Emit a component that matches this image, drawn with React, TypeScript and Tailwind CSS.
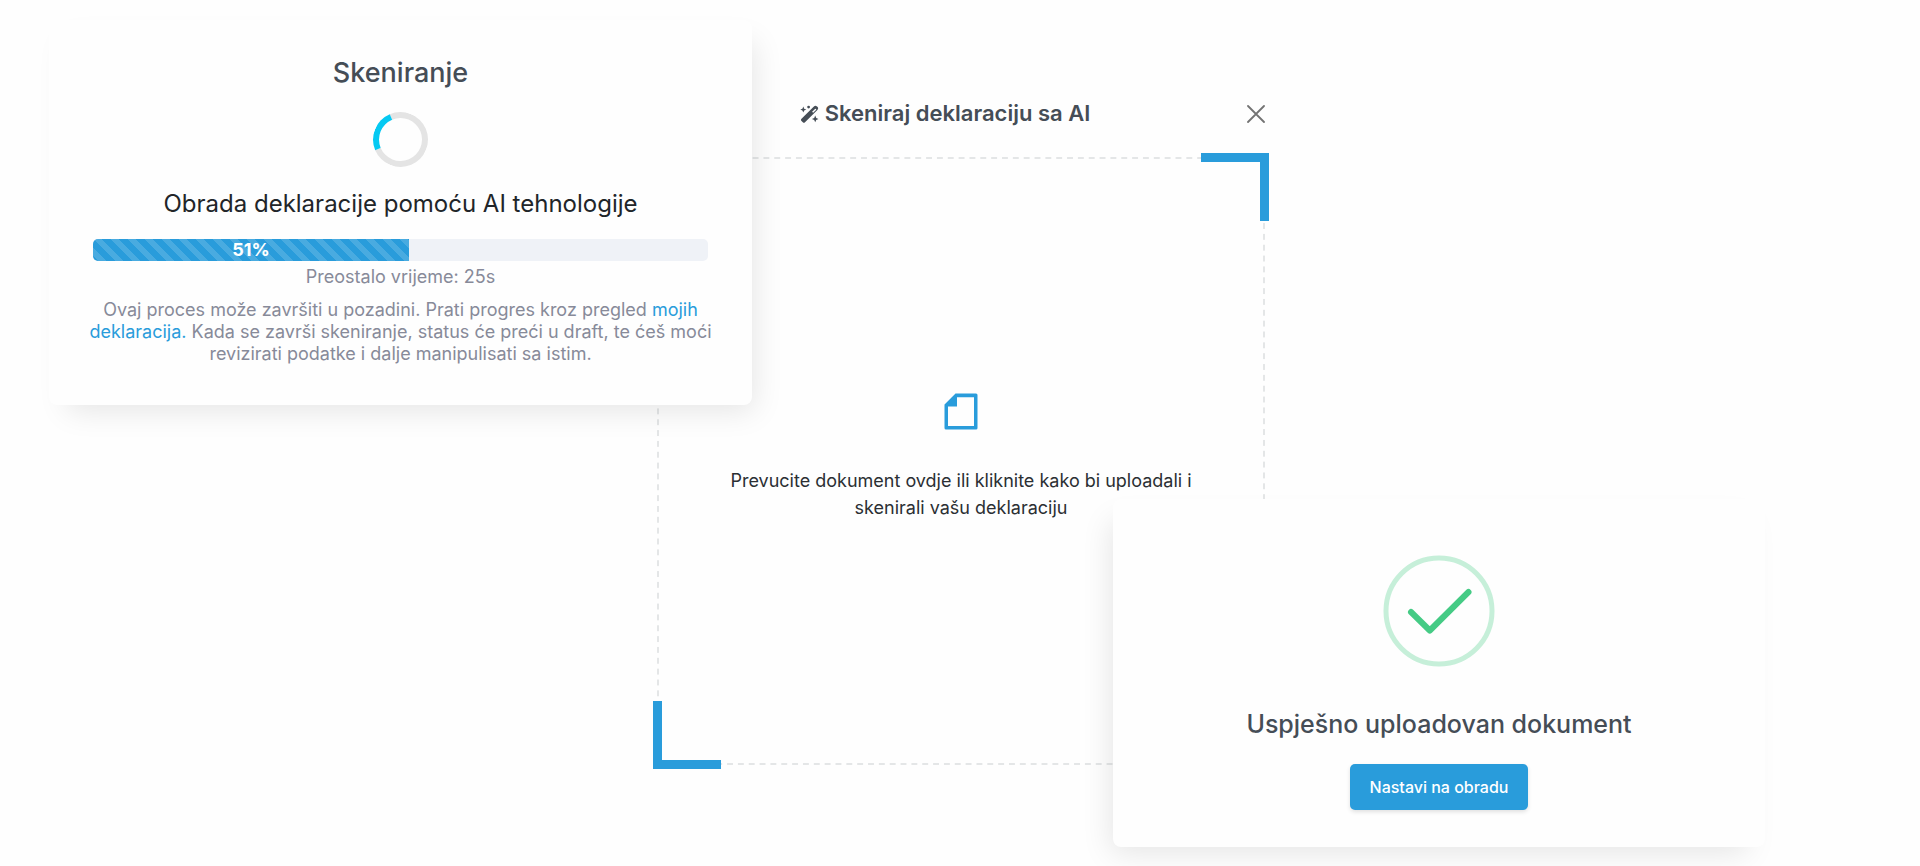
const DASHES =
  "bg-[linear-gradient(90deg,#e4e6e7_55%,transparent_0),linear-gradient(90deg,#e4e6e7_55%,transparent_0),linear-gradient(180deg,#e4e6e7_55%,transparent_0),linear-gradient(180deg,#e4e6e7_55%,transparent_0)] bg-[size:calc(100%/56)_2px,calc(100%/56)_2px,2px_calc(100%/56),2px_calc(100%/56)] bg-[position:-2px_0,5px_100%,0_2px,100%_1px] [background-repeat:repeat-x,repeat-x,repeat-y,repeat-y]";

function WandIcon() {
  return (
    <svg viewBox="0 0 19 18" className="h-[18px] w-[19px]" fill="currentColor" aria-hidden="true">
      <path
        fillRule="evenodd"
        d="M1.500 13.800 13.900 1.400a2.200 2.200 0 0 1 3.100 0l.4.4a2.200 2.200 0 0 1 0 3.100L5 17.300a1.600 1.600 0 0 1-2.200 0L1.500 16a1.600 1.600 0 0 1 0-2.200Zm10.600-7 1 1L16 4.900a.75.75 0 0 0 0-1 .75.75 0 0 0-1 0Z"
      />
      <path d="m3.300 1.600.9 2.100 2.100.9-2.100.9-.9 2.100-.9-2.100L.3 4.600l2.100-.9ZM15.200 10.600l1 2.300 2.300 1-2.300 1-1 2.300-1-2.300-2.300-1 2.300-1Z" />
      <circle cx="8.600" cy="2.100" r="1.400" />
    </svg>
  );
}

function ScanDialog() {
  return (
    <section className="mx-auto w-full max-w-[608px] pt-[97px]" aria-labelledby="scan-title">
      <header className="flex items-center">
        <h2
          id="scan-title"
          className="flex flex-1 items-center justify-center gap-1.5 text-[22px] leading-[33px] font-semibold text-[#454d56]"
        >
          <WandIcon />
          Skeniraj deklaraciju sa AI
        </h2>
        <button type="button" aria-label="Zatvori" className="flex w-8 justify-end">
          <svg viewBox="0 0 18 18" className="size-[18px]" fill="none" stroke="#737373" strokeWidth="1.8" strokeLinecap="round" aria-hidden="true">
            <path d="M1 1l16 16M17 1 1 17" />
          </svg>
        </button>
      </header>
      <button
        type="button"
        className={`relative mt-[27px] flex aspect-square w-full flex-col items-center justify-center gap-[37px] pb-2 ${DASHES}`}
      >
        <svg viewBox="0 0 34 37" className="h-[37px] w-[34px]" aria-hidden="true">
          <path
            fill="#299cdb"
            fillRule="evenodd"
            d="M11.500.5H32a1.500 1.500 0 0 1 1.500 1.500v33a1.500 1.500 0 0 1-1.500 1.500H2A1.500 1.500 0 0 1 .5 35V11.500ZM13 4.200V13.500H4V33h26V4.200Z"
          />
        </svg>
        <span className="w-[480px] text-[18px] leading-[27px] text-[#2b2f33]">
          Prevucite dokument ovdje ili kliknite kako bi uploadali i skenirali vašu deklaraciju
        </span>
        <span className="absolute -top-1 -right-1 size-[68px] border-t-[9px] border-r-[9px] border-[#299cdb]" />
        <span className="absolute -bottom-1 -left-1 size-[68px] border-b-[9px] border-l-[9px] border-[#299cdb]" />
      </button>
    </section>
  );
}

function ProgressCard() {
  return (
    <section className="absolute top-5 left-[49px] flex w-[703px] flex-col items-center rounded-lg bg-[#fefefe] px-11 pt-[37px] pb-10 text-center shadow-[10px_14px_28px_-8px_rgba(0,0,0,0.1)]">
      <h2 className="text-[27px] leading-8 font-medium text-[#454d56]">Skeniranje</h2>
      <div className="mt-[23px] size-[55px] rotate-[22deg] rounded-full border-[6px] border-[#e4e4e4] border-l-[#05c9f2]" />
      <p className="mt-[21px] text-[24px] leading-8 text-[#212529]">Obrada deklaracije pomoću AI tehnologije</p>
      <div
        role="progressbar"
        aria-label="Skeniranje"
        aria-valuenow={51}
        aria-valuemin={0}
        aria-valuemax={100}
        className="mt-[19px] flex h-[22px] w-full overflow-hidden rounded-[5px] bg-[#eff2f7]"
      >
        <div className="flex w-[51.4%] items-center justify-center bg-[#299cdb] bg-[linear-gradient(45deg,rgba(255,255,255,0.15)_25%,transparent_25%,transparent_50%,rgba(255,255,255,0.15)_50%,rgba(255,255,255,0.15)_75%,transparent_75%)] bg-[size:17px_17px] text-[18px] leading-[22px] font-bold text-white">
          51%
        </div>
      </div>
      <p className="mt-[5px] text-[18px] leading-[22px] text-[#878a99]">Preostalo vrijeme: 25s</p>
      <p className="-mx-2 mt-[11px] text-[18px] leading-[22px] text-[#878a99]">
        Ovaj proces može završiti u pozadini. Prati progres kroz pregled{" "}
        <a href="#deklaracije" className="text-[#299cdb]">
          mojih deklaracija.
        </a>{" "}
        Kada se završi skeniranje, status će preći u draft, te ćeš moći revizirati podatke i dalje manipulisati sa istim.
      </p>
    </section>
  );
}

function SuccessCard() {
  return (
    <section className="absolute top-[499px] left-[1113px] flex w-[652px] flex-col items-center rounded-lg bg-[#fefefe] pt-14 pb-[37px] shadow-[-10px_14px_28px_-8px_rgba(0,0,0,0.1)]">
      <svg viewBox="0 0 112 112" className="size-28" fill="none" aria-hidden="true">
        <circle cx="56" cy="56" r="53" stroke="#c6efd9" strokeWidth="5" />
        <path d="M28 57 46.800 75.500 85.500 37" stroke="#45cb85" strokeWidth="6" strokeLinecap="round" strokeLinejoin="round" />
      </svg>
      <h2 className="mt-[41px] text-[25px] leading-8 font-medium text-[#454d56]">Uspješno uploadovan dokument</h2>
      <button
        type="button"
        className="mt-6 h-[46px] rounded-[5px] bg-[#299cdb] px-5 text-[16px] font-medium text-white shadow-[0_2px_4px_rgba(0,0,0,0.12)]"
      >
        Nastavi na obradu
      </button>
    </section>
  );
}

export default function App() {
  return (
    <main className="relative min-h-screen overflow-hidden bg-[#fefefe] pl-0.5 font-[Inter,sans-serif]">
      <ScanDialog />
      <ProgressCard />
      <SuccessCard />
    </main>
  );
}
